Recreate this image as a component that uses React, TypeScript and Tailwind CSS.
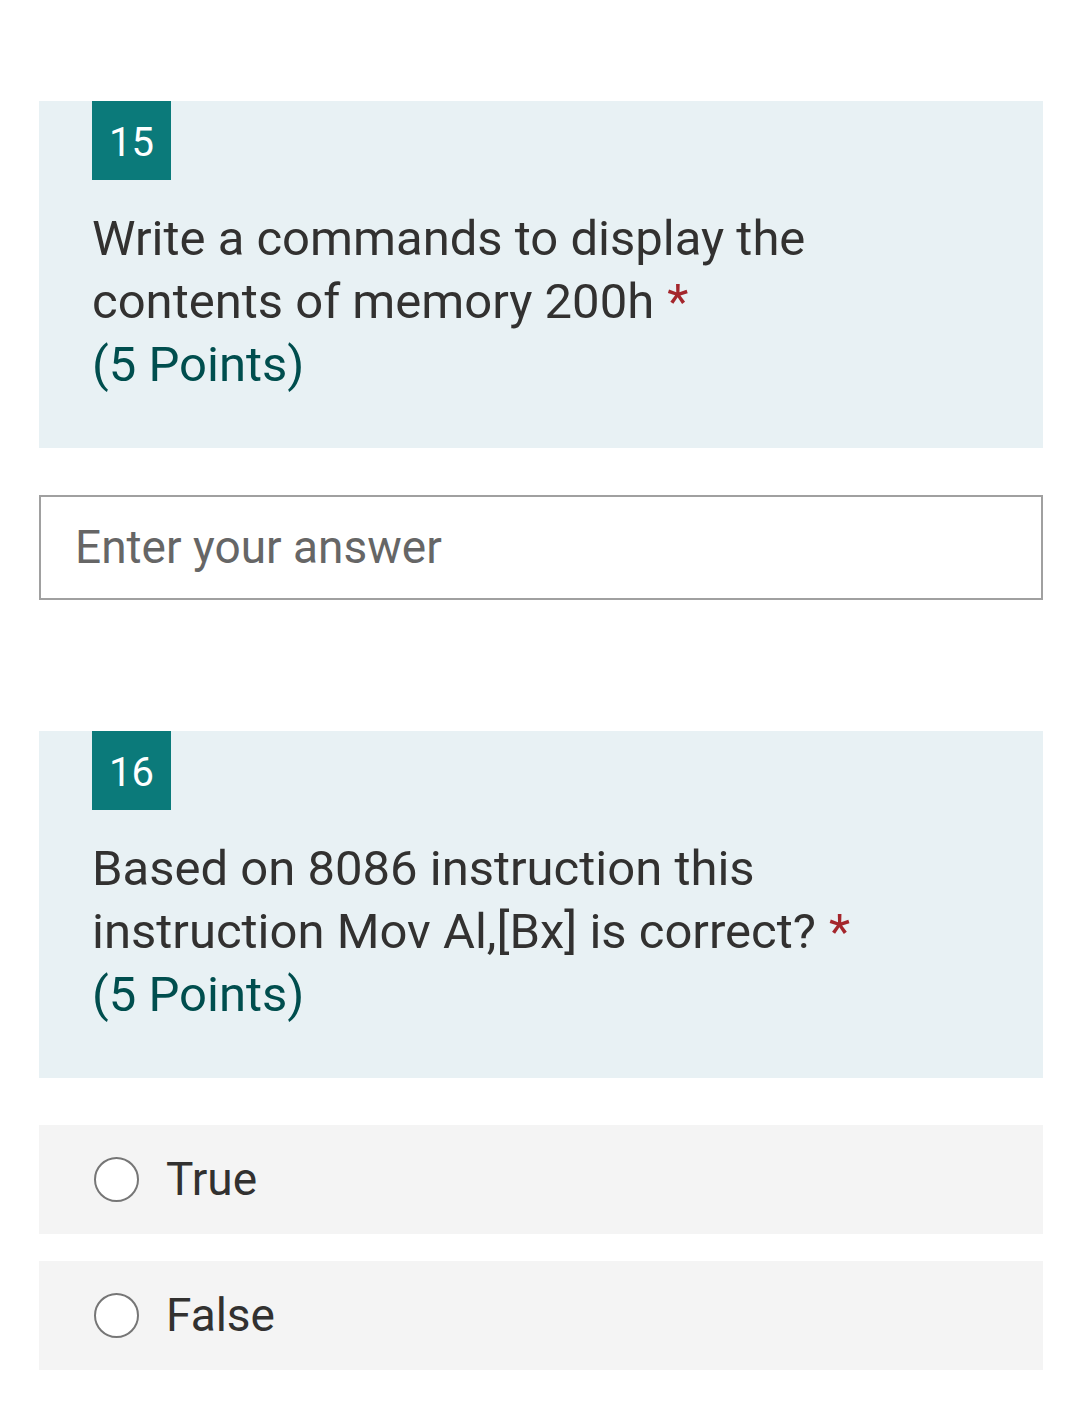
const QUESTIONS = [
  {
    number: 15,
    lines: ['Write a commands to display the', 'contents of memory 200h'],
  },
  {
    number: 16,
    lines: ['Based on 8086 instruction this', 'instruction Mov Al,[Bx] is correct?'],
  },
];

function QuestionCard({ number, lines }: { number: number; lines: string[] }) {
  return (
    <div className="bg-[#e8f1f4] px-[53px] pb-[52px]">
      <div className="flex h-[79px] w-[79px] items-center justify-center bg-[#0b7a7a] pt-[5px] text-[40px] text-white">
        {number}
      </div>
      <div className="mt-[27px] text-[49px] leading-[63px] text-[#323130]">
        {lines.map((line, i) => (
          <div key={line}>
            {line}
            {i === lines.length - 1 && <span className="ml-[13px] text-[#a4262c]">*</span>}
          </div>
        ))}
        <div className="text-[#004e4e]">(5 Points)</div>
      </div>
    </div>
  );
}

function Option({ label }: { label: string }) {
  return (
    <div className="flex h-[109px] items-center bg-[#f4f4f4] pl-[55px]">
      <span className="h-[45px] w-[45px] rounded-full border-2 border-[#767676] bg-white" />
      <span className="ml-[27px] text-[46px] text-[#323130]">{label}</span>
    </div>
  );
}

export default function App() {
  return (
    <div className="min-h-[1417px] w-[1080px] bg-white pl-[39px] pr-[37px] pt-[101px] font-['Roboto',sans-serif]">
      <QuestionCard number={QUESTIONS[0].number} lines={QUESTIONS[0].lines} />
      <div className="mt-[47px] flex h-[105px] items-center border-2 border-[#a0a0a0] pl-[34px] text-[46px] text-[#666666]">
        Enter your answer
      </div>
      <div className="mt-[131px]">
        <QuestionCard number={QUESTIONS[1].number} lines={QUESTIONS[1].lines} />
      </div>
      <div className="mt-[47px] flex flex-col gap-[27px]">
        <Option label="True" />
        <Option label="False" />
      </div>
    </div>
  );
}
